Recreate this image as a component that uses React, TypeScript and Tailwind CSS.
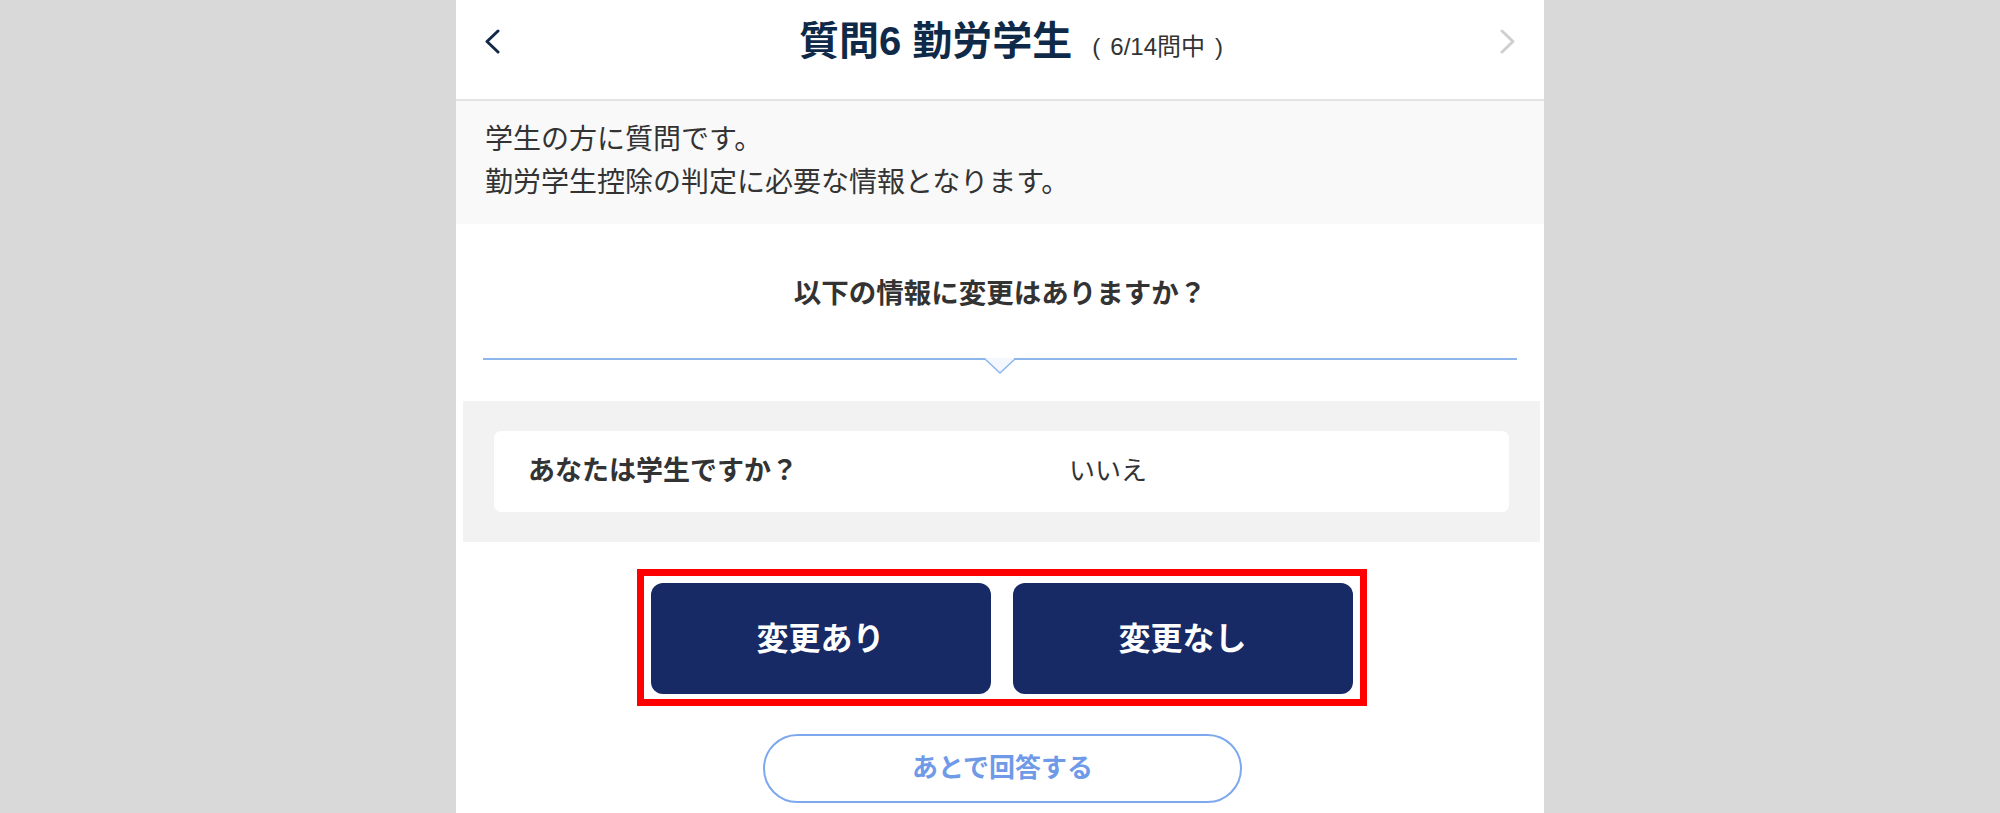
import React from "react";

function Chevron({ dir, color }: { dir: "left" | "right"; color: string }) {
  const pts = dir === "left" ? "14,2 3,12.5 14,23" : "4,2 15,12.5 4,23";
  return (
    <svg width="18" height="25" viewBox="0 0 18 25" fill="none">
      <polyline
        points={pts}
        stroke={color}
        strokeWidth="3"
        strokeLinecap="round"
        strokeLinejoin="round"
      />
    </svg>
  );
}

function Header() {
  return (
    <div className="h-[101px] border-b-2 border-[#e4e4e4] bg-white">
      <div className="flex h-[82px] items-center px-[28px]">
        <Chevron dir="left" color="#14294a" />
        <div className="flex flex-1 items-baseline justify-center pl-[22px]">
          <span className="text-[40px] font-bold leading-none text-[#0f2a48]">
            質問6 勤労学生
          </span>
          <span className="ml-[20px] text-[24px] leading-none text-[#333]">
            (<span className="mx-[10px]">6/14問中</span>)
          </span>
        </div>
        <Chevron dir="right" color="#cfcfcf" />
      </div>
    </div>
  );
}

function Divider() {
  return (
    <div className="mx-[27px] flex items-start">
      <div className="h-[2px] flex-1 bg-[#8db6ec]" />
      <svg width="30" height="16" viewBox="0 0 30 16" className="-mx-px">
        <polygon points="0,0 30,0 15,15" fill="#f4f8fe" />
        <polyline
          points="0,1 15,15 30,1"
          fill="none"
          stroke="#8db6ec"
          strokeWidth="1.5"
        />
      </svg>
      <div className="h-[2px] flex-1 bg-[#8db6ec]" />
    </div>
  );
}

export default function App() {
  return (
    <div className="min-h-[813px] bg-[#d9d9d9] font-['Liberation_Sans','Noto_Sans_CJK_JP',sans-serif]">
      <div className="mx-auto flex min-h-[813px] w-[1088px] flex-col bg-white pb-[20px]">
        <Header />

        <div className="bg-[#f9f9f9] px-[29px] pb-[20px] pt-[17px] text-[28px] leading-[43px] text-[#333]">
          <p>学生の方に質問です。</p>
          <p>勤労学生控除の判定に必要な情報となります。</p>
        </div>

        <div className="pt-[50px] text-center text-[27.5px] font-bold leading-[40px] text-[#333]">
          以下の情報に変更はありますか？
        </div>
        <div className="mt-[44px]">
          <Divider />
        </div>

        <div className="ml-[7px] mr-[4px] mt-[27px] bg-[#f2f2f2] px-[31px] py-[30px]">
          <div className="flex h-[81px] items-center rounded-[7px] bg-white px-[34px] text-[#333]">
            <span className="w-[541px] text-[27px] font-bold">
              あなたは学生ですか？
            </span>
            <span className="text-[26px]">いいえ</span>
          </div>
        </div>

        <div className="mt-[27px] flex justify-center pl-[3px]">
          <div className="flex gap-[22px] border-[7px] border-[#ff0000] px-[7px] pb-[5px] pt-[7px]">
            <button className="h-[111px] w-[340px] rounded-[12px] bg-[#172a66] text-[32px] font-bold text-white">
              変更あり
            </button>
            <button className="h-[111px] w-[340px] rounded-[12px] bg-[#172a66] text-[32px] font-bold text-white">
              変更なし
            </button>
          </div>
        </div>

        <div className="mt-[28px] flex justify-center pl-[5px]">
          <button className="h-[69px] w-[479px] rounded-full border-2 border-[#7ea8ee] bg-white text-[26px] font-bold text-[#6f9ae8]">
            あとで回答する
          </button>
        </div>
      </div>
    </div>
  );
}
